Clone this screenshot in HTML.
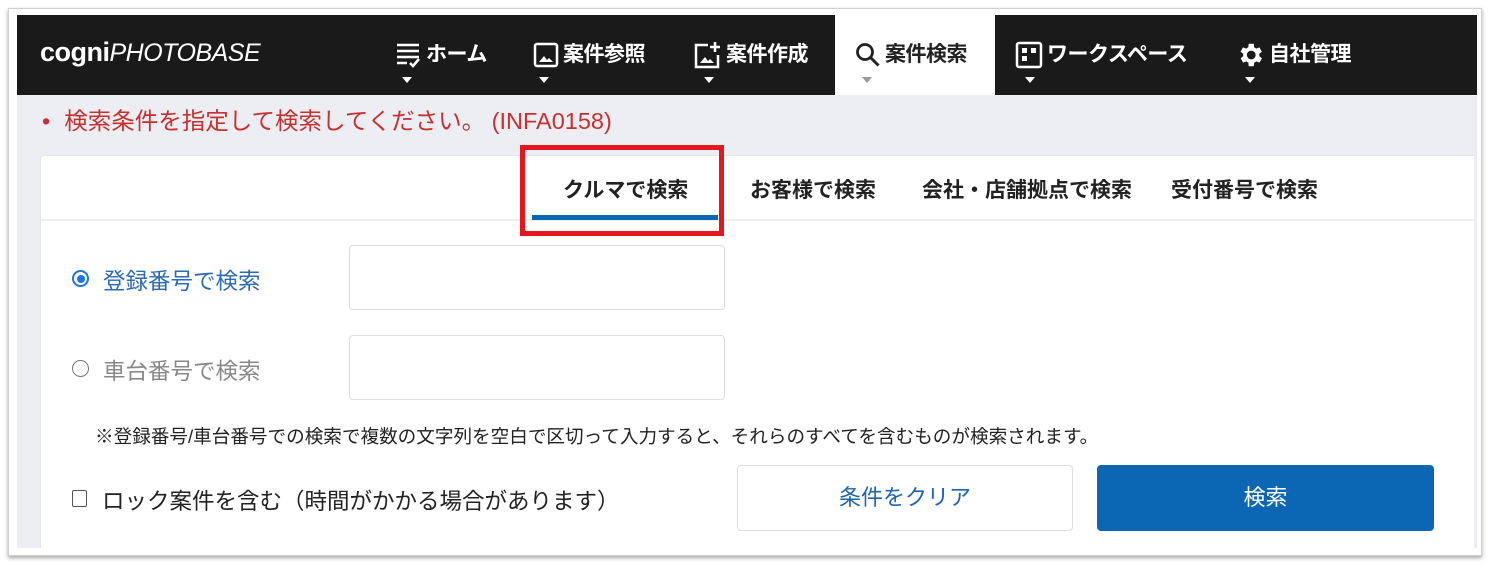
<!DOCTYPE html>
<html><head><meta charset="utf-8"><style>
*{margin:0;padding:0;box-sizing:border-box}
body{width:1490px;height:566px;background:#fff;font-family:"Liberation Sans","Noto Sans CJK JP",sans-serif;position:relative;overflow:hidden}
.frame{position:absolute;left:8px;top:8px;width:1474px;height:548px;border:1px solid #d0d0d0;box-shadow:0 2px 4px rgba(0,0,0,.35);background:#fff}
.nav{position:absolute;left:17px;top:15px;width:1460px;height:80px;background:#1a1a1a}
.gray{position:absolute;left:17px;top:95px;width:1460px;height:453px;background:#eceef3}
.panel{position:absolute;left:40px;top:155px;width:1434px;height:393px;background:#fff;border-radius:4px 0 0 0;border:1px solid #e4e6ea;border-right:none;border-bottom:none}
.ni{position:absolute;top:15px;color:#fff;font-weight:bold;font-size:21px;line-height:80px;height:80px;display:flex;align-items:center;letter-spacing:-0.5px}
.ni svg{margin-right:4px}
.car{position:absolute;width:0;height:0;border-left:5px solid transparent;border-right:5px solid transparent;border-top:6px solid #fff;top:77px}
.t{position:absolute;font-size:21px;font-weight:bold;color:#222;top:174px}
.inp{position:absolute;left:349px;width:376px;height:65px;border:1px solid #dcdde1;border-radius:4px}
</style></head><body>
<div class="frame"></div>
<div class="nav"></div>
<div style="position:absolute;left:835px;top:15px;width:160px;height:80px;background:#fff"></div>
<div class="gray"></div>
<div style="position:absolute;left:40px;top:37px;color:#fff;font-size:27px;font-weight:bold;letter-spacing:-0.5px">cogni<span style="font-style:italic;font-weight:normal;font-size:25px">PHOTOBASE</span></div>
<div class="ni" style="left:396px"><svg width="26" height="28" viewBox="0 0 26 28"><g stroke="#fff" stroke-width="2.5" fill="none"><path d="M1 4h22M1 10h22M1 16h22M1 22h10M14 22l3 3 6-7"/></g></svg>ホーム</div>
<div class="car" style="left:402px"></div>
<div class="ni" style="left:533px"><svg width="26" height="26" viewBox="0 0 26 26"><rect x="2" y="2" width="22" height="22" rx="2" stroke="#fff" stroke-width="2.5" fill="none"/><path d="M6 20l5-6 3 4 2-2 4 4z" fill="#fff"/></svg>案件参照</div>
<div class="car" style="left:539px"></div>
<div class="ni" style="left:694px"><svg width="28" height="28" viewBox="0 0 28 28"><path d="M14 4H2v22h22V14" stroke="#fff" stroke-width="2.5" fill="none"/><path d="M21 1v10M16 6h10" stroke="#fff" stroke-width="2.5"/><path d="M6 22l5-6 3 4 2-2 4 4z" fill="#fff"/></svg>案件作成</div>
<div class="car" style="left:704px"></div>
<div class="ni" style="left:855px;color:#222"><svg width="26" height="26" viewBox="0 0 26 26"><circle cx="10" cy="10" r="7.5" stroke="#222" stroke-width="2.8" fill="none"/><path d="M15.5 15.5l8 8" stroke="#222" stroke-width="3"/></svg>案件検索</div>
<div class="car" style="left:862px;border-top-color:#999"></div>
<div class="ni" style="left:1015px"><svg width="28" height="28" viewBox="0 0 28 28"><rect x="2" y="2" width="24" height="24" rx="2" stroke="#fff" stroke-width="2.5" fill="none"/><rect x="7" y="7" width="5" height="5" fill="#fff"/><rect x="16" y="7" width="5" height="5" fill="#fff"/><rect x="7" y="15" width="5" height="5" fill="#fff"/></svg>ワークスペース</div>
<div class="car" style="left:1025px"></div>
<div class="ni" style="left:1235px"><svg width="30" height="30" viewBox="0 0 24 24"><path fill="#fff" d="M19.4 13a7.5 7.5 0 0 0 0-2l2.1-1.6-2-3.5-2.5 1a7 7 0 0 0-1.7-1L15 3h-4l-.4 2.9a7 7 0 0 0-1.7 1l-2.5-1-2 3.5L6.6 11a7.5 7.5 0 0 0 0 2l-2.1 1.6 2 3.5 2.5-1a7 7 0 0 0 1.7 1L11 21h4l.4-2.9a7 7 0 0 0 1.7-1l2.5 1 2-3.5zM13 15.5a3.5 3.5 0 1 1 0-7 3.5 3.5 0 0 1 0 7z"/></svg>自社管理</div>
<div class="car" style="left:1245px"></div>
<div style="position:absolute;left:42px;top:102px;color:#c8302f;font-size:23.5px;white-space:nowrap">•<span style="margin-left:14px">検索条件を指定して検索してください。 (INFA0158)</span></div>
<div class="panel"></div>
<div style="position:absolute;left:41px;top:219px;width:1433px;height:2px;background:#eef0f3"></div>
<div class="t" style="left:563px">クルマで検索</div>
<div style="position:absolute;left:532px;top:215px;width:186px;height:5px;background:#0b67b4"></div>
<div class="t" style="left:750px">お客様で検索</div>
<div class="t" style="left:922px">会社・店舗拠点で検索</div>
<div class="t" style="left:1171px">受付番号で検索</div>
<div style="position:absolute;left:520px;top:145px;width:204px;height:91px;border:5px solid #e3171f"></div>
<div style="position:absolute;left:72px;top:270px;width:17px;height:17px;border-radius:50%;border:2px solid #1c74e6;background:#fff"><div style="position:absolute;left:2.5px;top:2.5px;width:8px;height:8px;border-radius:50%;background:#1c74e6"></div></div>
<div style="position:absolute;left:103px;top:264px;font-size:22.5px;color:#2d6ab5">登録番号で検索</div>
<div style="position:absolute;left:72px;top:360px;width:17px;height:17px;border-radius:50%;border:1.5px solid #777"></div>
<div style="position:absolute;left:103px;top:354px;font-size:22.5px;color:#888">車台番号で検索</div>
<div class="inp" style="top:245px"></div>
<div class="inp" style="top:335px"></div>
<div style="position:absolute;left:95px;top:422px;font-size:18.6px;color:#222;white-space:nowrap">※登録番号/車台番号での検索で複数の文字列を空白で区切って入力すると、それらのすべてを含むものが検索されます。</div>
<div style="position:absolute;left:72px;top:490px;width:15px;height:17px;border:1.5px solid #555;border-radius:2px"></div>
<div style="position:absolute;left:102px;top:484px;font-size:22.5px;color:#222;white-space:nowrap">ロック案件を含む（時間がかかる場合があります）</div>
<div style="position:absolute;left:737px;top:465px;width:336px;height:66px;border:1px solid #dcdde1;border-radius:4px;text-align:center;line-height:64px;font-size:22px;color:#1e64b0">条件をクリア</div>
<div style="position:absolute;left:1097px;top:465px;width:337px;height:66px;background:#0b67b4;border-radius:4px;text-align:center;line-height:66px;font-size:22px;color:#fff">検索</div>
</body></html>
